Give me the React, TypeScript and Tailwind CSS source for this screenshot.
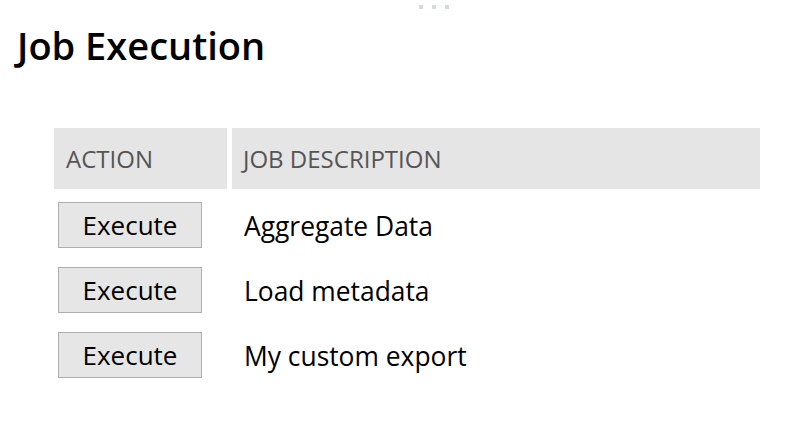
const jobs = ['Aggregate Data', 'Load metadata', 'My custom export'];

export default function App() {
  return (
    <div
      className="relative w-[796px] h-[421px] bg-white text-black"
      style={{ fontFamily: '"Open Sans", sans-serif' }}
    >
      <div className="absolute top-[5px] left-[419px] flex gap-[9px]">
        <span className="w-[4px] h-[4px] bg-[#d3dbdb]" />
        <span className="w-[4px] h-[4px] bg-[#d3dbdb]" />
        <span className="w-[4px] h-[4px] bg-[#d3dbdb]" />
      </div>

      <h1 className="pl-[17px] pt-[18px] text-[38px] leading-[54px] font-semibold">Job Execution</h1>

      <div className="ml-[54px] mt-[56px] grid grid-cols-[173px_528px] gap-[5px]">
        <div className="h-[61px] bg-[#e5e5e5] flex items-center px-[12px] text-[24px] text-[#555] uppercase">
          Action
        </div>
        <div className="h-[61px] bg-[#e5e5e5] flex items-center px-[11px] text-[24px] text-[#555] uppercase">
          Job Description
        </div>

        {jobs.map((job) => (
          <div key={job} className="contents">
            <div className="h-[60px] flex items-center pl-[4px] pt-[2px]">
              <button className="w-[144px] h-[46px] bg-[#e6e6e6] border border-[#adadad] text-[26px]">
                Execute
              </button>
            </div>
            <div className="h-[60px] flex items-center px-[12px] pt-[5px] text-[26.4px]">{job}</div>
          </div>
        ))}
      </div>
    </div>
  );
}
